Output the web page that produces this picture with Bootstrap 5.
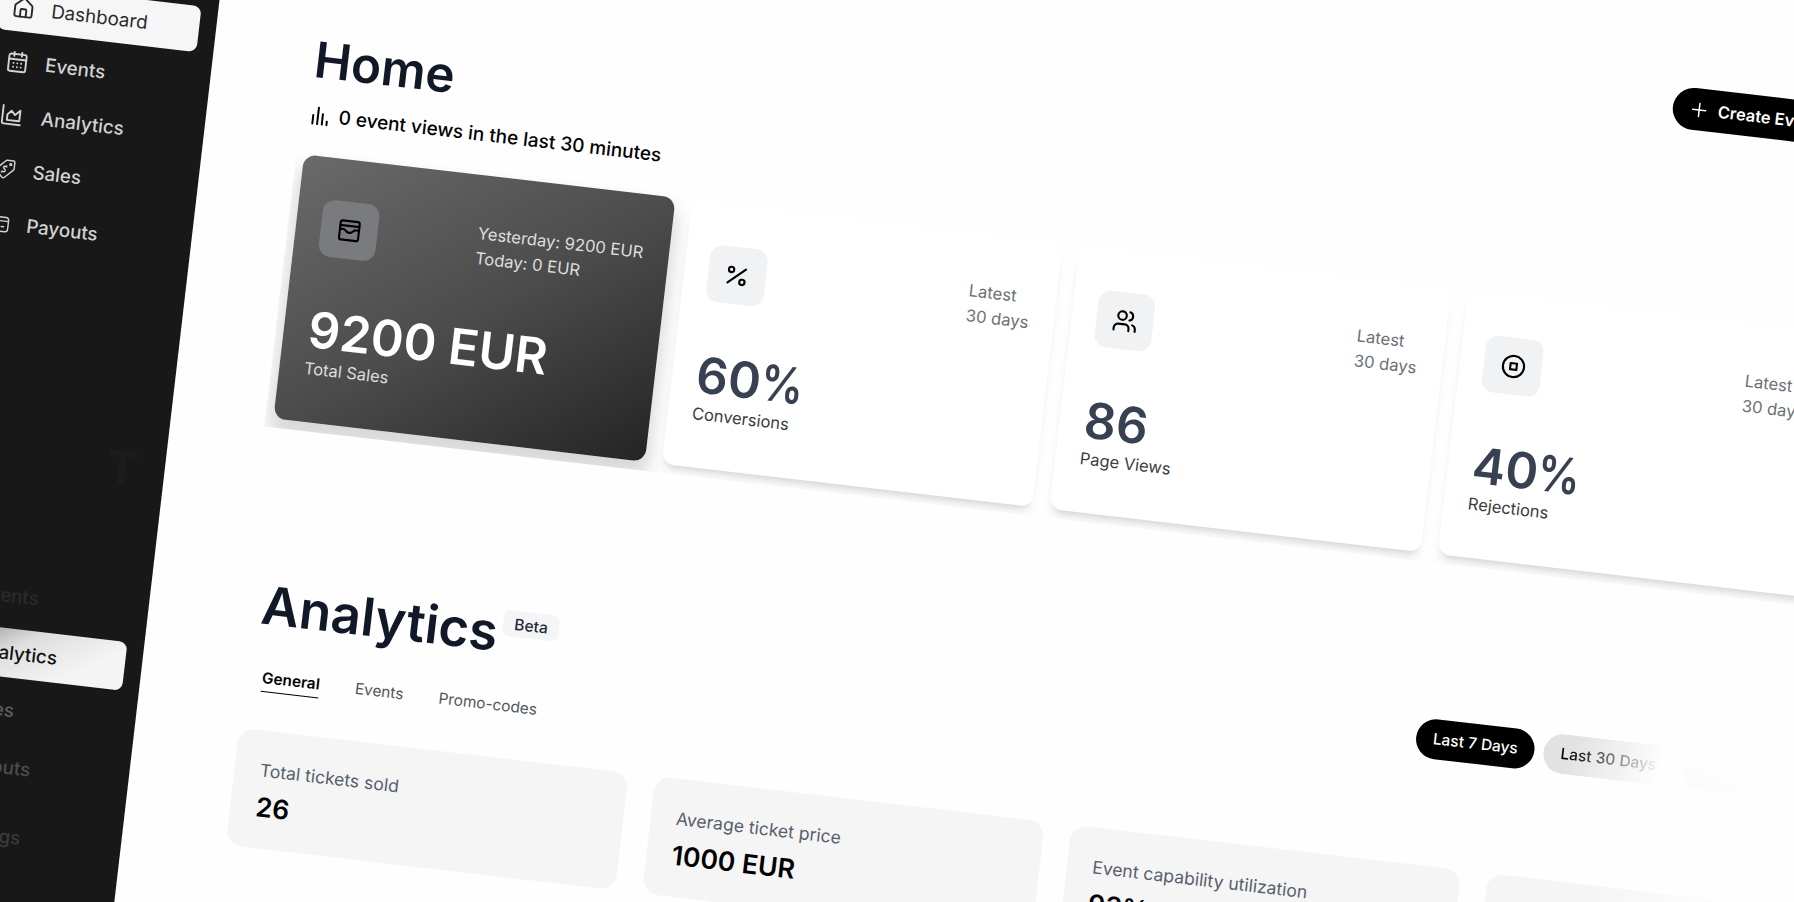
<!DOCTYPE html>
<html lang="en">
<head>
  <meta charset="UTF-8">
  <meta name="viewport" content="width=device-width, initial-scale=1.0">
  <title>Dashboard</title>

  <!-- Bootstrap CSS -->
  <link href="https://cdn.jsdelivr.net/npm/bootstrap@5.3.3/dist/css/bootstrap.min.css" rel="stylesheet">

  <style>
    body {
      background-color: #fefefe;
      font-family: "Inter", "Liberation Sans", sans-serif;
      color: #000;
    }

    .stage {
      width: 1794px;
      height: 902px;
    }

    /* the whole dashboard is tilted */
    .board {
      width: 1920px;
      height: 1130px;
      margin-top: -220px;
      transform: rotate(6.65deg);
      transform-origin: 0 220px;
    }

    svg {
      fill: none;
      stroke: currentColor;
      stroke-width: 2;
      stroke-linecap: round;
      stroke-linejoin: round;
      flex: none;
    }

    svg.thin {
      stroke-width: 1.5;
    }

    /* Sidebar */
    .side {
      width: 318.4px;
      margin-left: -100px;
      padding: 202.6px 17.2px 0 100px;
      background-color: #181818;
      color: #d2d2d2;
    }

    .side-menu {
      gap: 8px;
    }

    .side-item {
      height: 46.1px;
      gap: 16.8px;
      padding-left: 12.6px;
      font-size: 18.8px;
      font-weight: 500;
      line-height: 1.5;
      border-radius: 8px;
    }

    .side-item svg {
      width: 23px;
      height: 23px;
    }

    .side-item.wide-gap {
      gap: 19px;
    }

    .side-item.current {
      background-color: #f6f6f6;
      color: #2a2a2a;
      font-weight: 400;
    }

    .side-letter {
      margin-top: 180.4px;
      padding-left: 160px;
      font-size: 46px;
      font-weight: 700;
      line-height: 50px;
      color: #1c1c1c;
    }

    .side-menu.lower {
      margin-top: 90.3px;
    }

    .lower .side-item {
      height: 49px;
      padding-top: 2px;
      padding-left: 47.5px;
    }

    .lower .side-item.current {
      margin-left: -60px;
      padding-left: 109.5px;
      background: linear-gradient(150deg, #8a8a8a 25%, #dedede 52%, #f4f4f4 80%);
      color: #111;
      font-weight: 500;
    }

    .dim-1 { color: #2b2b2b; }
    .dim-2 { color: #5c5c5c; }
    .dim-3 { color: #4c4c4c; }

    .lower .dim-4 {
      margin: 12px 0 0 -3.5px;
      color: #3a3a3a;
    }

    /* Main column */
    .content {
      padding: 111px 0 0 101.7px;
    }

    .top-bar {
      padding-left: 1354.2px;
    }

    .btn-create {
      height: 42px;
      gap: 9px;
      padding: 0 20px 0 16px;
      font-size: 16.5px;
      font-weight: 600;
    }

    .page-title {
      margin: 60.1px 0 0 -0.5px;
      font-size: 49.5px;
      font-weight: 600;
      line-height: 58px;
      color: #111827;
    }

    .views-line {
      margin-top: 13.2px;
      gap: 6px;
      font-size: 19px;
      font-weight: 500;
      line-height: 27px;
    }

    /* clips the soft shadows of the cards */
    .kpi-strip {
      margin: 20.4px 0 0 -8.5px;
      padding: 6px 0 9px 8.5px;
      gap: 17px;
    }

    .kpi {
      position: relative;
      width: 373.6px;
      height: 266.3px;
      flex: none;
      padding: 42px 25.5px 0 24.6px;
      border-radius: 12px;
      background-color: #fff;
      box-shadow: 0 7px 7px -4px rgba(0, 0, 0, .15), 0 18px 10px 2px rgba(0, 0, 0, .02);
    }

    .kpi-main {
      background: linear-gradient(145deg, #6a6a6a 0%, #4b4b4b 52%, #242424 100%);
      box-shadow: 0 14px 18px 4px rgba(0, 0, 0, .15);
      color: #e6e6e6;
    }

    .kpi-icon {
      width: 57.6px;
      height: 57.6px;
      border-radius: 12px;
      background-color: #f1f2f4;
      color: #000;
    }

    .kpi-main .kpi-icon {
      background-color: #7a7b7e;
    }

    .kpi-icon svg {
      width: 25.5px;
      height: 25.5px;
    }

    .kpi-note {
      margin-top: 4.7px;
      font-size: 16.6px;
      line-height: 24.5px;
      color: #6b7078;
    }

    .kpi-main .kpi-note {
      color: #dedede;
    }

    .kpi-value {
      margin-top: 48.2px;
      font-size: 49.8px;
      font-weight: 600;
      line-height: 53px;
      color: #374151;
    }

    /* narrow percent sign */
    .pct {
      display: inline-block;
      transform: scaleX(.86);
      transform-origin: 0 50%;
    }

    .kpi-main .kpi-value {
      color: #fff;
    }

    .kpi-label {
      font-size: 16.5px;
      line-height: 24px;
      color: #3a3d42;
    }

    .kpi-main .kpi-label {
      color: #dcdcdc;
    }

    /* Analytics */
    .ana-head {
      width: 1549px;
      height: 62px;
      margin: 145.6px 0 0 10px;
    }

    .ana-title {
      margin: 0;
      width: 242px;
      font-size: 52.4px;
      font-weight: 600;
      line-height: 62px;
      color: #111827;
    }

    .beta {
      width: 56px;
      height: 26px;
      margin-top: 8px;
      padding-top: 2px;
      border-radius: 6px;
      background-color: #f4f5f6;
      font-size: 15.6px;
      font-weight: 500;
      line-height: 1;
      color: #1f2937;
    }

    .ranges {
      margin-top: 9.5px;
      gap: 9px;
    }

    .btn-range {
      height: 40px;
      width: 119px;
      padding: 0;
      font-size: 15.5px;
      font-weight: 500;
      line-height: 40px;
    }

    .btn-range.fading {
      width: 131px;
      background-color: #e2e2e2;
      color: #000;
      -webkit-mask-image: linear-gradient(105deg, #000 22%, transparent 88%);
      mask-image: linear-gradient(105deg, #000 22%, transparent 88%);
    }

    .btn-range.ghost {
      background: linear-gradient(20deg, #fafafa, #fefefe 45%);
    }

    .tabs {
      margin: 31.5px 0 0 18.8px;
      gap: 35.5px;
      font-size: 15.4px;
      line-height: 22px;
      color: #50555c;
    }

    .tabs .on {
      padding-bottom: 1.5px;
      border-bottom: 1.5px solid #000;
      font-weight: 600;
      color: #000;
    }

    .stats {
      margin: 38.6px 0 0 1.7px;
      gap: 27px;
    }

    .stat {
      width: 392px;
      height: 117.7px;
      flex: none;
      padding: 27px 25.7px 0;
      border-radius: 16px;
      background-color: #f5f5f5;
    }

    .stat.fading {
      background: linear-gradient(90deg, #f5f5f5 25%, #fefefe 65%);
    }

    .stat-label {
      font-size: 17.6px;
      line-height: 26px;
      color: #56606d;
    }

    .stat-value {
      margin-top: 6.3px;
      font-size: 26.6px;
      font-weight: 600;
      line-height: 34px;
    }
  </style>
</head>

<body>

<div class="stage overflow-hidden">
  <div class="board d-flex">

    <!-- Sidebar -->
    <aside class="side flex-shrink-0">
      <nav class="side-menu d-flex flex-column">
        <div class="side-item current d-flex align-items-center">
          <svg viewBox="0 0 24 24"><path d="M9 21v-7a1 1 0 0 1 1-1h4a1 1 0 0 1 1 1v7"/><path d="M3 10a2 2 0 0 1 .7-1.5l7-6a2 2 0 0 1 2.6 0l7 6A2 2 0 0 1 21 10v9a2 2 0 0 1-2 2H5a2 2 0 0 1-2-2z"/></svg>
          <span>Dashboard</span>
        </div>
        <div class="side-item d-flex align-items-center">
          <svg viewBox="0 0 24 24"><rect x="3" y="4" width="18" height="18" rx="2"/><path d="M8 2v4M16 2v4M3 9.5h18M8 13.5h.01M12 13.5h.01M16 13.5h.01M8 17.5h.01M12 17.5h.01M16 17.5h.01"/></svg>
          <span>Events</span>
        </div>
        <div class="side-item wide-gap d-flex align-items-center">
          <svg viewBox="0 0 24 24"><path d="M3 2v17a2 2 0 0 0 2 2h17"/><path d="M8 17V11l4-4 4 4 5-5v10.5a.5.5 0 0 1-.5.5z"/></svg>
          <span>Analytics</span>
        </div>
        <div class="side-item d-flex align-items-center">
          <svg class="thin" viewBox="0 0 24 24"><path d="M13.5 2.5H20A1.5 1.5 0 0 1 21.5 4v6.5a2 2 0 0 1-.6 1.4l-8.5 8.5a2 2 0 0 1-2.8 0l-6-6a2 2 0 0 1 0-2.8l8.5-8.5a2 2 0 0 1 1.4-.6z"/><circle cx="17.5" cy="6.5" r="1"/><path d="M13.5 9.5c-1-1-2.8-.6-3.2.4-.6 1.6 2.6 1.9 2.2 3.7-.3 1.3-2.2 1.5-3.3.5M13.5 8.5v1M9.5 14.5l-.8.8"/></svg>
          <span>Sales</span>
        </div>
        <div class="side-item d-flex align-items-center">
          <svg class="thin" viewBox="0 0 24 24"><rect x="2" y="4.5" width="20" height="15" rx="3"/><path d="M2 8.5h20M15 14.5h2.5"/></svg>
          <span>Payouts</span>
        </div>
      </nav>

      <div class="side-letter">T</div>

      <nav class="side-menu lower d-flex flex-column">
        <div class="side-item dim-1 d-flex align-items-center">Events</div>
        <div class="side-item current d-flex align-items-center">Analytics</div>
        <div class="side-item dim-2 d-flex align-items-center">Sales</div>
        <div class="side-item dim-3 d-flex align-items-center">Payouts</div>
        <div class="side-item dim-4 d-flex align-items-center">Settings</div>
      </nav>
    </aside>

    <!-- Main -->
    <main class="content flex-grow-1">
      <div class="top-bar d-flex">
        <button class="btn-create btn btn-dark bg-black border-0 rounded-pill d-flex align-items-center text-nowrap">
          <svg class="thin" width="20" height="20" viewBox="0 0 20 20"><path d="M10.5 4v13M4 10.5h13"/></svg>
          Create Event
        </button>
      </div>

      <h1 class="page-title">Home</h1>
      <div class="views-line d-flex align-items-center">
        <svg width="24" height="24" viewBox="0 0 24 24"><path d="M4.5 20.5V12M9.3 20.5V4M14 20.5V10M18.7 20.5v-3.5"/></svg>
        <span>0 event views in the last 30 minutes</span>
      </div>

      <div class="kpi-strip d-flex overflow-hidden">
        <div class="kpi kpi-main">
          <div class="d-flex justify-content-between align-items-start">
            <div class="kpi-icon d-flex align-items-center justify-content-center">
              <svg viewBox="0 0 24 24"><rect x="3" y="3" width="18" height="18" rx="2"/><path d="M3 7.5h18"/><path d="M3 11h3c.8 0 1.6.3 2.1.9l1.1.9c1.6 1.6 4.1 1.6 5.7 0l1.1-.9c.5-.5 1.3-.9 2.1-.9H21"/></svg>
            </div>
            <div class="kpi-note">Yesterday: 9200 EUR<br>Today: 0 EUR</div>
          </div>
          <div class="kpi-value">9200 EUR</div>
          <div class="kpi-label">Total Sales</div>
        </div>

        <div class="kpi">
          <div class="d-flex justify-content-between align-items-start">
            <div class="kpi-icon d-flex align-items-center justify-content-center">
              <svg viewBox="0 0 24 24"><path d="M20 5 4 19"/><circle cx="6.5" cy="6.5" r="2.5"/><circle cx="17.5" cy="17.5" r="2.5"/></svg>
            </div>
            <div class="kpi-note">Latest<br>30 days</div>
          </div>
          <div class="kpi-value">60<span class="pct">%</span></div>
          <div class="kpi-label">Conversions</div>
        </div>

        <div class="kpi">
          <div class="d-flex justify-content-between align-items-start">
            <div class="kpi-icon d-flex align-items-center justify-content-center">
              <svg viewBox="0 0 24 24"><path d="M16 21v-2a4 4 0 0 0-4-4H6a4 4 0 0 0-4 4v2"/><circle cx="9" cy="7" r="4"/><path d="M22 21v-2a4 4 0 0 0-3-3.87M16 3.13a4 4 0 0 1 0 7.75"/></svg>
            </div>
            <div class="kpi-note">Latest<br>30 days</div>
          </div>
          <div class="kpi-value">86</div>
          <div class="kpi-label">Page Views</div>
        </div>

        <div class="kpi">
          <div class="d-flex justify-content-between align-items-start">
            <div class="kpi-icon d-flex align-items-center justify-content-center">
              <svg viewBox="0 0 24 24"><circle cx="12" cy="12" r="10"/><path d="M9 9h6v6H9z"/></svg>
            </div>
            <div class="kpi-note">Latest<br>30 days</div>
          </div>
          <div class="kpi-value">40<span class="pct">%</span></div>
          <div class="kpi-label">Rejections</div>
        </div>
      </div>

      <div class="ana-head d-flex align-items-start">
        <h2 class="ana-title">Analytics</h2>
        <span class="beta d-flex align-items-center justify-content-center">Beta</span>
        <div class="ranges d-flex ms-auto">
          <button class="btn-range btn btn-dark bg-black border-0 rounded-pill">Last 7 Days</button>
          <button class="btn-range fading btn border-0 rounded-pill">Last 30 Days</button>
          <span class="btn-range ghost rounded-pill"></span>
        </div>
      </div>

      <div class="tabs d-flex align-items-start">
        <span class="on">General</span>
        <span>Events</span>
        <span>Promo-codes</span>
      </div>

      <div class="stats d-flex">
        <div class="stat">
          <div class="stat-label">Total tickets sold</div>
          <div class="stat-value">26</div>
        </div>
        <div class="stat">
          <div class="stat-label">Average ticket price</div>
          <div class="stat-value">1000 EUR</div>
        </div>
        <div class="stat">
          <div class="stat-label">Event capability utilization</div>
          <div class="stat-value">93%</div>
        </div>
        <div class="stat fading"></div>
      </div>
    </main>

  </div>
</div>

<!-- Bootstrap Bundle (JS + Popper) -->
<script src="https://cdn.jsdelivr.net/npm/bootstrap@5.3.3/dist/js/bootstrap.bundle.min.js"></script>

</body>
</html>
